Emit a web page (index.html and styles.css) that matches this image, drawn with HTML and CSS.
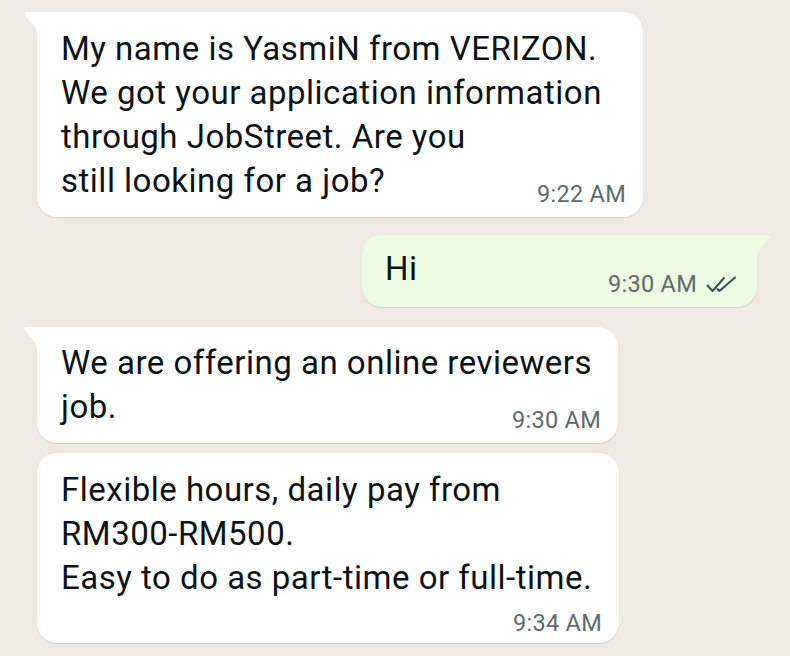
FILE: index.html
```html
<!DOCTYPE html>
<html>
<head>
<meta charset="utf-8">
<link rel="stylesheet" href="styles.css">
</head>
<body>
<div class="chat">
  <div class="bubble in tail b1">
    <svg class="tail-in" width="13" height="24" viewBox="0 0 13 24"><path d="M13 0 H2.5 C0.6 0 -0.2 2 1.2 3.6 L10.5 14.5 C12.2 16.6 13 19 13 24 Z" fill="#fff"/></svg>
    <div class="text">My name is YasmiN from VERIZON.<br>We got your application information<br>through JobStreet. Are you<br>still looking for a job?</div>
    <div class="meta">9:22 AM</div>
  </div>
  <div class="bubble out tail b2">
    <svg class="tail-out" width="13" height="24" viewBox="0 0 13 24"><path d="M0 0 H10.5 C12.4 0 13.2 2 11.8 3.6 L2.5 14.5 C0.8 16.6 0 19 0 24 Z" fill="#ecfbe1"/></svg>
    <div class="text">Hi</div>
    <div class="meta">9:30 AM
      <svg class="ticks" width="31" height="17" viewBox="0 0 31 17"><path d="M1.5 9.5 L6.5 15 L18 2 M11.5 13 L13.5 15 L29 1.5" fill="none" stroke="#34504f" stroke-width="2" stroke-linecap="round" stroke-linejoin="round"/></svg>
    </div>
  </div>
  <div class="bubble in tail b3">
    <svg class="tail-in" width="13" height="24" viewBox="0 0 13 24"><path d="M13 0 H2.5 C0.6 0 -0.2 2 1.2 3.6 L10.5 14.5 C12.2 16.6 13 19 13 24 Z" fill="#fff"/></svg>
    <div class="text">We are offering an online reviewers<br>job.</div>
    <div class="meta">9:30 AM</div>
  </div>
  <div class="bubble in b4">
    <div class="text">Flexible hours, daily pay from<br>RM300-RM500.<br>Easy to do as part-time or full-time.</div>
    <div class="meta">9:34 AM</div>
  </div>
</div>
</body>
</html>
```

FILE: styles.css
```css
html, body {
  margin: 0;
  padding: 0;
}
body {
  background: #eeeae3;
  font-family: Roboto, "Noto Sans", sans-serif;
  color: #111b21;
  width: 790px;
  height: 656px;
  overflow: hidden;
}
.chat {
  display: flex;
  flex-direction: column;
  padding: 12px 0 0 37px;
}
.bubble {
  position: relative;
  box-sizing: border-box;
  border-radius: 20px;
  padding: 15px 17px 10px 24px;
  box-shadow: 0 1px 1px rgba(0, 0, 0, 0.12);
}
.bubble.in {
  background: #fff;
  align-self: flex-start;
}
.bubble.in.tail {
  border-top-left-radius: 0;
}
.bubble.out {
  background: #ecfbe1;
  align-self: flex-start;
  margin-left: 325px;
  padding-right: 20px;
  padding-left: 23px;
}
.bubble.out.tail {
  border-top-right-radius: 0;
}
.tail-in {
  position: absolute;
  left: -13px;
  top: 0;
}
.tail-out {
  position: absolute;
  right: -13px;
  top: 0;
}
.text {
  font-size: 33px;
  line-height: 44px;
  letter-spacing: 0.5px;
  white-space: nowrap;
  color: #0b1317;
}
.meta {
  font-size: 23.5px;
  line-height: 26px;
  letter-spacing: 0.3px;
  color: #5d6a70;
  margin-top: -22px;
  display: flex;
  justify-content: flex-end;
  align-items: center;
  gap: 9px;
}
.ticks {
  display: block;
}
.b1 { width: 606px; }
.b2 { width: 395px; margin-top: 18px; padding-top: 12px; }
.b2 .meta { margin-top: -20px; }
.b3 { width: 581px; margin-top: 20px; padding-top: 14px; }
.b4 { width: 582px; margin-top: 10px; padding-bottom: 7px; }
.b4 .meta { margin-top: 10px; }
```
